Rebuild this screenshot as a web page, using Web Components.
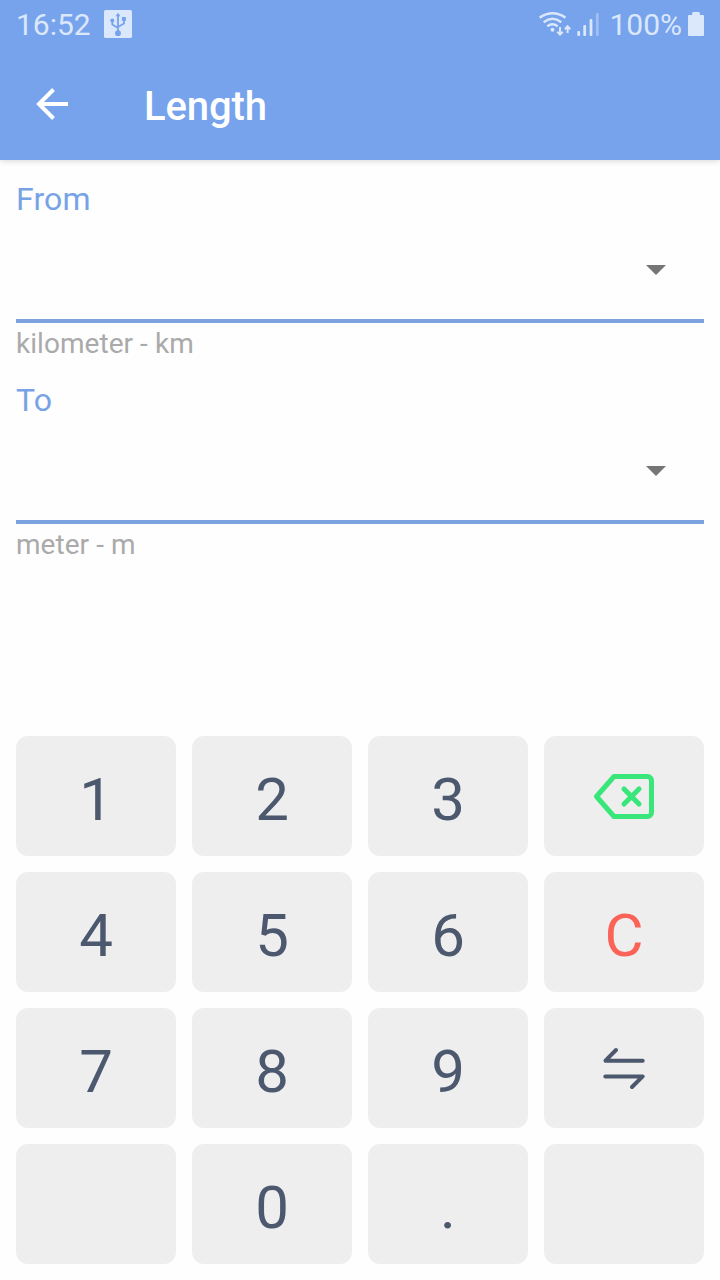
<!DOCTYPE html>
<html lang="en">
<head>
<meta charset="utf-8">
<title>Length</title>
<style>
html,body{margin:0;height:100%;background:#fefefe}
body{font-family:Roboto,"Liberation Sans",sans-serif}
</style>
</head>
<body>
<converter-app></converter-app>
<script>
class BaseElement extends HTMLElement {
  connectedCallback() {
    if (!this.shadowRoot) this.attachShadow({ mode: 'open' }).innerHTML = this.render();
  }
}

class StatusBar extends BaseElement {
  render() {
    return `<style>
      :host{display:flex;box-sizing:border-box;height:48px;padding:1px 15px 0 16px;align-items:center;color:#dbe7fb;font-size:30px;line-height:48px}
      svg{display:block;flex:none}
      .usb{margin-left:13px}
      .net{margin-left:auto}
      .pct{margin-left:9px}
      .bat{margin-left:6px}
    </style>
    <span class="time">16:52</span>
    <svg class="usb" width="28" height="48" viewBox="104 1 28 48">
      <rect x="104" y="10" width="28" height="28" rx="1.5" fill="#dbe7fb"/>
      <g fill="none" stroke="#76a3ec" stroke-width="1.8"><path d="M118 34V15M112.3 21v3.500l5.700 3.500M124 19v4.500l-6 3.500"/></g>
      <g fill="#76a3ec"><circle cx="118" cy="33.2" r="2.9"/><path d="M118 12.8l2.4 3.4h-4.8z"/><circle cx="112.3" cy="20.6" r="2"/><rect x="121.9" y="17" width="4" height="3.8"/></g>
    </svg>
    <svg class="net" width="61" height="48" viewBox="539 1 61 48">
      <g fill="none" stroke="#dbe7fb" stroke-width="2.5">
        <path d="M539.7 17.600Q552.5 8.800 565.5 17.600M543.7 22.2Q552.5 15.4 561.3 22.2M547.3 26.4Q552.5 22.2 557.7 26.4"/>
      </g>
      <circle cx="552.5" cy="29.8" r="2" fill="#dbe7fb"/>
      <path d="M560 27v7.4M557.3 31.7l2.7 2.9 2.7-2.9M567.6 33v-6.6M564.9 29.2l2.7-2.9 2.7 2.9" fill="none" stroke="#dbe7fb" stroke-width="2"/>
      <g fill="#dbe7fb"><rect x="577.3" y="31" width="2.8" height="5" rx="1"/><rect x="583.3" y="25" width="2.8" height="11" rx="1"/><rect x="589.6" y="19" width="2.8" height="17" rx="1"/><rect x="595.9" y="13" width="2.8" height="23" rx="1" opacity=".42"/></g>
    </svg>
    <span class="pct">100%</span>
    <svg class="bat" width="17" height="48" viewBox="688 1 17 48"><path d="M689 15h3.2v-2q0-1 1-1h5.600q1 0 1 1v2h3.200q1 0 1 1v19q0 1-1 1h-14q-1 0-1-1v-19q0-1 1-1z" fill="#dbe7fb"/></svg>`;
  }
}

class AppToolbar extends BaseElement {
  render() {
    return `<style>
      :host{display:flex;height:112px;align-items:flex-start;color:#fff}
      svg{display:block;margin:40px 0 0 36px}
      h1{margin:35px 0 0 76px;font-size:40px;font-weight:500;line-height:48px;letter-spacing:-.1px}
    </style>
    <svg width="32" height="32" viewBox="0 0 32 32" fill="none" stroke="#fff" stroke-width="4"><path d="M32 16H3M17.500 1.500L3 16l14.500 14.500"/></svg>
    <h1><slot></slot></h1>`;
  }
}

class UnitField extends BaseElement {
  render() {
    return `<style>
      :host{display:block;height:201px;box-sizing:border-box}
      .label{font-size:32px;line-height:38px;color:#77a3e6;letter-spacing:.15px}
      .select{height:101px;box-sizing:content-box;border-bottom:4px solid #7ca2e0;display:flex;justify-content:flex-end}
      svg{display:block;margin:47px 38px 0 0}
      .hint{font-size:28px;line-height:32px;padding-top:5px;color:#aaa;letter-spacing:.05px}
    </style>
    <div class="label">${this.getAttribute('label')}</div>
    <div class="select"><svg width="20" height="10" viewBox="0 0 20 10"><path d="M0 0h20L10 10z" fill="#757575"/></svg></div>
    <div class="hint"><slot></slot></div>`;
  }
}

class PadKey extends BaseElement {
  render() {
    return `<style>
      :host{display:flex;align-items:center;justify-content:center;box-sizing:border-box;height:120px;border-radius:12px;background:#eee;color:#4c586d;font-size:60px;line-height:71px}
      :host([clear]){color:#fb6359}
      span{padding-top:7px}
      ::slotted(svg){display:block}
    </style>${this.querySelector('svg') ? '<slot></slot>' : '<span><slot></slot></span>'}`;
  }
}

class KeyPad extends BaseElement {
  render() {
    return `<style>
      :host{display:grid;grid-template-columns:repeat(4,1fr);gap:16px;padding:16px}
    </style>
    <pad-key>1</pad-key><pad-key>2</pad-key><pad-key>3</pad-key>
    <pad-key><svg width="160" height="120" viewBox="544 736 160 120" fill="none" stroke="#38e67a" stroke-width="5" stroke-linecap="round" stroke-linejoin="round"><path d="M614 776.500h33.500a4 4 0 0 1 4 4v32a4 4 0 0 1-4 4H614L596.500 796.500z"/><path d="M624 789l15 15M639 789l-15 15"/></svg></pad-key>
    <pad-key>4</pad-key><pad-key>5</pad-key><pad-key>6</pad-key><pad-key clear>C</pad-key>
    <pad-key>7</pad-key><pad-key>8</pad-key><pad-key>9</pad-key>
    <pad-key><svg width="160" height="120" viewBox="544 1008 160 120" fill="none" stroke="#4c586d" stroke-width="4" stroke-linecap="round" stroke-linejoin="round"><path d="M642.700 1060.700H605.500L616 1050M605.300 1076.400H642.700L632 1087"/></svg></pad-key>
    <pad-key></pad-key><pad-key>0</pad-key><pad-key>.</pad-key><pad-key></pad-key>`;
  }
}

class ConverterApp extends BaseElement {
  render() {
    return `<style>
      :host{display:flex;flex-direction:column;height:1280px;width:720px;overflow:hidden;background:#fefefe}
      header{height:160px;background:#76a3ec;box-shadow:0 1px 6px rgba(0,0,0,.16)}
      main{padding:20px 16px 0;flex:1}
    </style>
    <header><status-bar></status-bar><app-toolbar>Length</app-toolbar></header>
    <main>
      <unit-field label="From">kilometer - km</unit-field>
      <unit-field label="To">meter - m</unit-field>
    </main>
    <key-pad></key-pad>`;
  }
}

customElements.define('status-bar', StatusBar);
customElements.define('app-toolbar', AppToolbar);
customElements.define('unit-field', UnitField);
customElements.define('pad-key', PadKey);
customElements.define('key-pad', KeyPad);
customElements.define('converter-app', ConverterApp);
</script>
</body>
</html>
